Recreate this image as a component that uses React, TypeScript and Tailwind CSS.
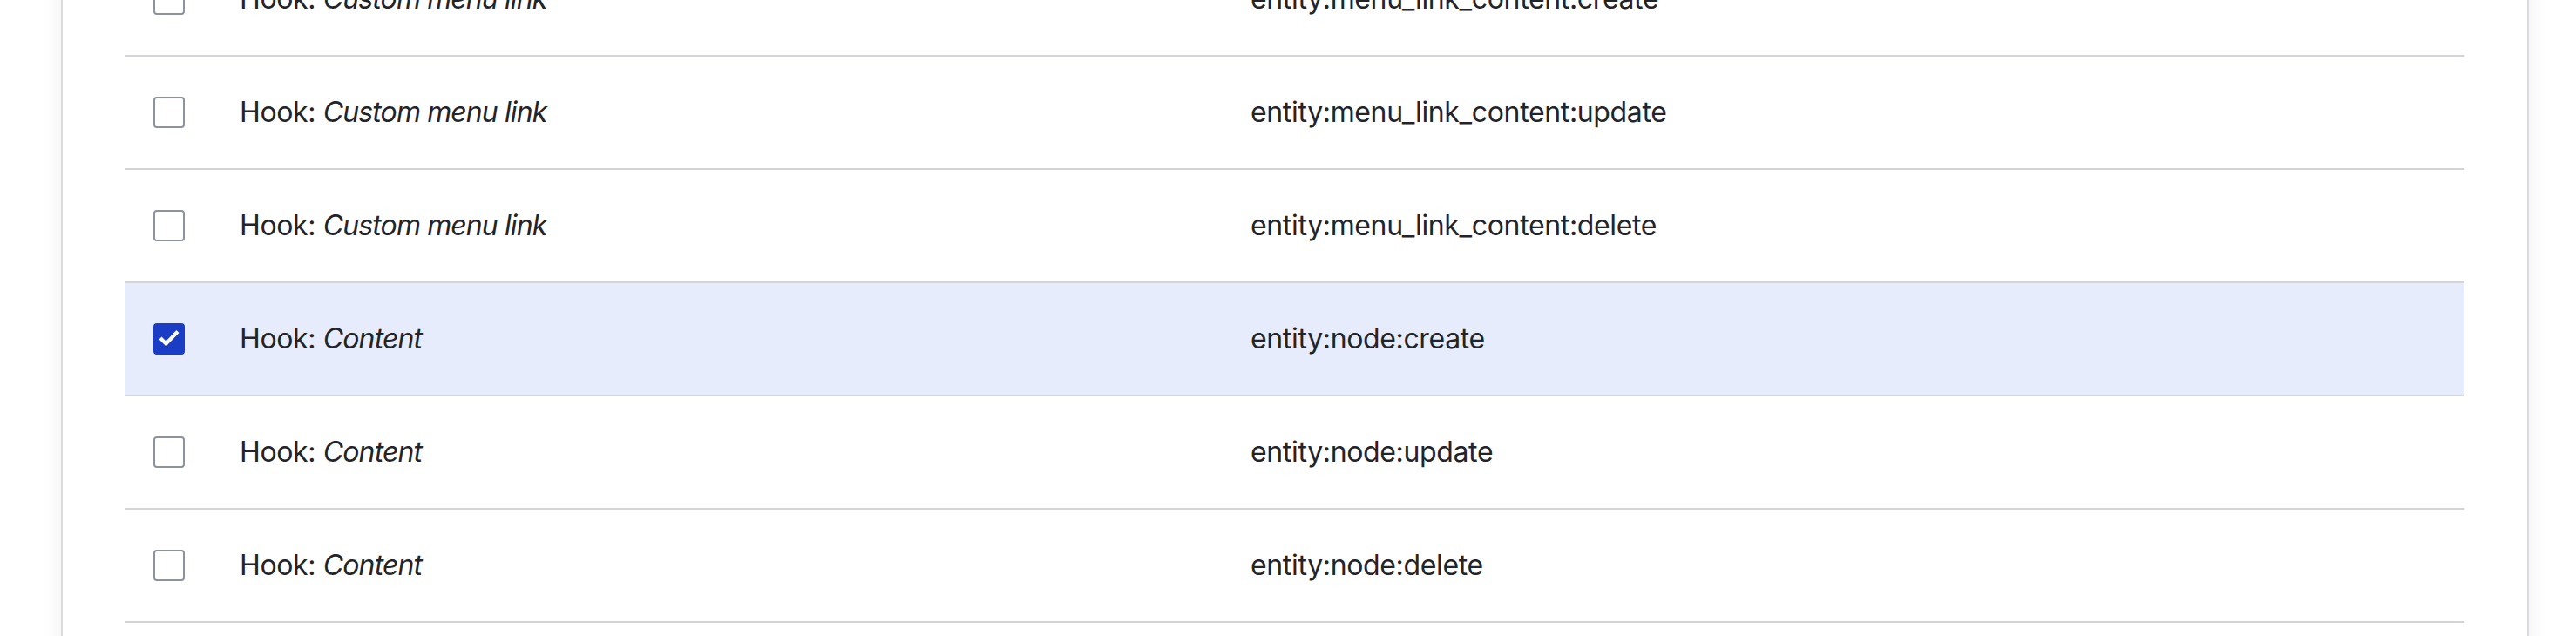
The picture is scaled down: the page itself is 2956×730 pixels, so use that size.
import React from "react";

type Row = { entity: string; machine: string; checked?: boolean };

const rows: Row[] = [
  { entity: "Custom menu link", machine: "entity:menu_link_content:create" },
  { entity: "Custom menu link", machine: "entity:menu_link_content:update" },
  { entity: "Custom menu link", machine: "entity:menu_link_content:delete" },
  { entity: "Content", machine: "entity:node:create", checked: true },
  { entity: "Content", machine: "entity:node:update" },
  { entity: "Content", machine: "entity:node:delete" },
  { entity: "Content", machine: "entity:node:presave" },
];

function Checkbox({ checked }: { checked?: boolean }) {
  if (checked) {
    return (
      <div className="w-[36px] h-[36px] rounded-[4px] bg-[#1b3dc5]">
        <svg width="36" height="36" viewBox="0 0 36 36" fill="none">
          <path d="M9.5 18.5 L14.5 23.5 L26.5 11" stroke="#ffffff" strokeWidth="4.2" strokeLinecap="square" strokeLinejoin="miter" />
        </svg>
      </div>
    );
  }
  return <div className="w-[36px] h-[36px] rounded-[4px] border-2 border-[#8e929c] bg-white" />;
}

export default function App() {
  return (
    <div className="w-[2956px] h-[730px] overflow-hidden bg-white" style={{ fontFamily: "Inter, 'Noto Sans', sans-serif" }}>
      <div className="pl-[70px] pr-[54px] h-full">
        <div className="h-[900px] -mt-[65px] border-x-2 border-[#dadbe0] bg-white px-[72px] shadow-[0_0_22px_rgba(0,0,0,0.07)]">
          {rows.map((r, i) => (
            <div
              key={i}
              className={
                "grid grid-cols-[131px_1160px_1fr] items-center h-[130px] border-b-2 border-[#d3d4d9] text-[32px] leading-none tracking-[-0.35px] text-[#232429] " +
                (r.checked ? "bg-[#e6ecfb]" : "bg-white")
              }
            >
              <div className="pl-[32px] flex items-center">
                <Checkbox checked={r.checked} />
              </div>
              <div>
                Hook: <em className="italic tracking-[-0.9px]">{r.entity}</em>
              </div>
              <div>{r.machine}</div>
            </div>
          ))}
        </div>
      </div>
    </div>
  );
}
